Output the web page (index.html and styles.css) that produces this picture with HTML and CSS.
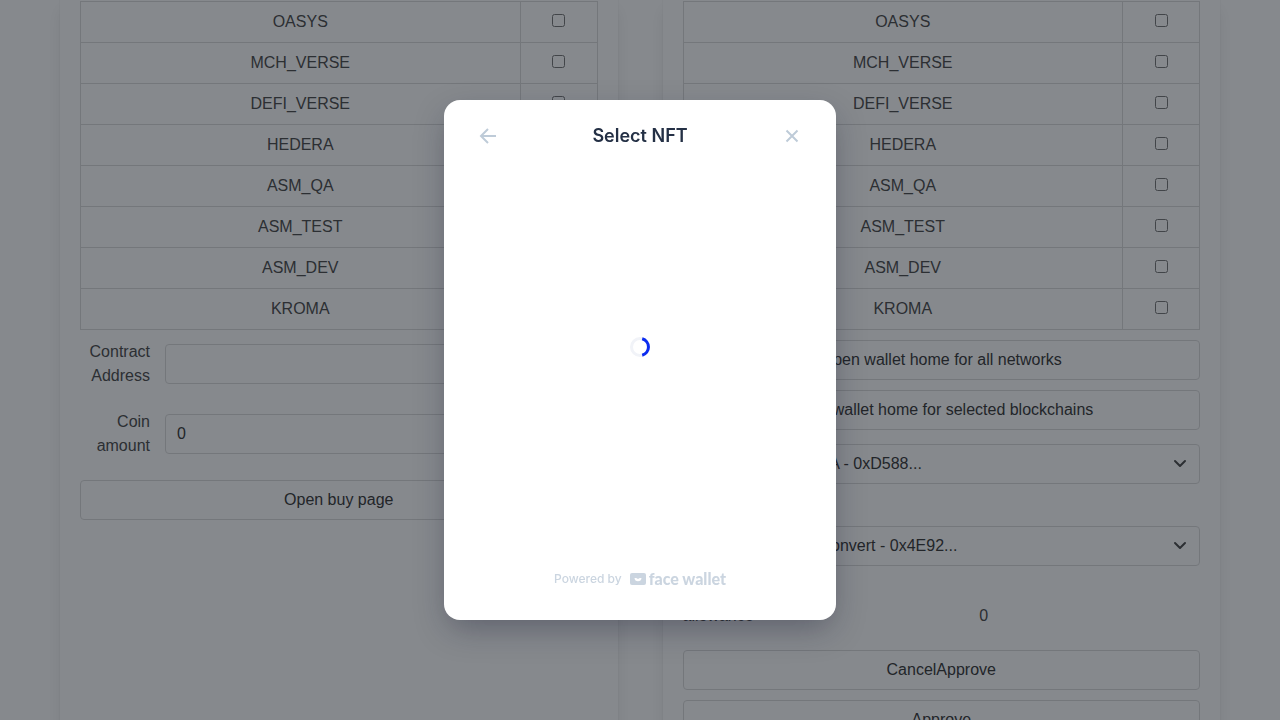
FILE: index.html
```html
<!DOCTYPE html>
<html lang="en">
<head>
<meta charset="utf-8">
<meta name="viewport" content="width=device-width, initial-scale=1">
<title>Select NFT</title>
<link rel="stylesheet" href="styles.css">
</head>
<body>
<main class="columns">
  <section class="box">
    <table class="table">
      <tbody>
        <tr><td><label for="a1">OASYS</label></td><td><input type="checkbox" id="a1"></td></tr>
        <tr><td><label for="a2">MCH_VERSE</label></td><td><input type="checkbox" id="a2"></td></tr>
        <tr><td><label for="a3">DEFI_VERSE</label></td><td><input type="checkbox" id="a3"></td></tr>
        <tr><td><label for="a4">HEDERA</label></td><td><input type="checkbox" id="a4"></td></tr>
        <tr><td><label for="a5">ASM_QA</label></td><td><input type="checkbox" id="a5"></td></tr>
        <tr><td><label for="a6">ASM_TEST</label></td><td><input type="checkbox" id="a6"></td></tr>
        <tr><td><label for="a7">ASM_DEV</label></td><td><input type="checkbox" id="a7"></td></tr>
        <tr><td><label for="a8">KROMA</label></td><td><input type="checkbox" id="a8"></td></tr>
      </tbody>
    </table>
    <div class="field">
      <label class="field-label" for="address">Contract Address</label>
      <input class="input" type="text" id="address">
    </div>
    <div class="field">
      <label class="field-label" for="amount">Coin amount</label>
      <input class="input" type="text" id="amount" value="0">
    </div>
    <button class="button" type="button">Open buy page</button>
  </section>

  <section class="box">
    <table class="table">
      <tbody>
        <tr><td><label for="b1">OASYS</label></td><td><input type="checkbox" id="b1"></td></tr>
        <tr><td><label for="b2">MCH_VERSE</label></td><td><input type="checkbox" id="b2"></td></tr>
        <tr><td><label for="b3">DEFI_VERSE</label></td><td><input type="checkbox" id="b3"></td></tr>
        <tr><td><label for="b4">HEDERA</label></td><td><input type="checkbox" id="b4"></td></tr>
        <tr><td><label for="b5">ASM_QA</label></td><td><input type="checkbox" id="b5"></td></tr>
        <tr><td><label for="b6">ASM_TEST</label></td><td><input type="checkbox" id="b6"></td></tr>
        <tr><td><label for="b7">ASM_DEV</label></td><td><input type="checkbox" id="b7"></td></tr>
        <tr><td><label for="b8">KROMA</label></td><td><input type="checkbox" id="b8"></td></tr>
      </tbody>
    </table>
    <button class="button" type="button">Open wallet home for all networks</button>
    <button class="button" type="button">Open wallet home for selected blockchains</button>
    <div class="field">
      <label class="field-label" for="token">Token contract</label>
      <div class="select">
        <select id="token"><option>Badge A - 0xD588...</option></select>
        <svg class="caret" viewBox="0 0 14 9" aria-hidden="true"><path d="M2 2l5 5 5-5"/></svg>
      </div>
    </div>
    <div class="field">
      <label class="field-label" for="spender">Spender contract address</label>
      <div class="select">
        <select id="spender"><option>Face Convert - 0x4E92...</option></select>
        <svg class="caret" viewBox="0 0 14 9" aria-hidden="true"><path d="M2 2l5 5 5-5"/></svg>
      </div>
    </div>
    <div class="field">
      <span class="field-label field-label-start">allowance</span>
      <output class="value">0</output>
    </div>
    <button class="button" type="button">CancelApprove</button>
    <button class="button" type="button">Approve</button>
  </section>
</main>

<div class="overlay">
  <div class="modal" role="dialog" aria-modal="true" aria-labelledby="modal-title">
    <header class="modal-header">
      <button class="icon-button" type="button" aria-label="Back">
        <svg class="icon" viewBox="0 0 24 24"><path d="M20 12H5.500M12 5l-7 7 7 7"/></svg>
      </button>
      <h1 class="modal-title" id="modal-title">Select NFT</h1>
      <button class="icon-button" type="button" aria-label="Close">
        <svg class="icon" viewBox="0 0 24 24"><path d="M6.500 6.500l11 11M17.500 6.500l-11 11"/></svg>
      </button>
    </header>
    <div class="modal-body">
      <svg class="spinner" viewBox="0 0 20 20" role="img" aria-label="Loading">
        <circle class="spinner-track" cx="10" cy="10" r="8.500"/>
        <path class="spinner-arc" d="M12.200 1.800A8.500 8.500 0 0 1 12.200 18.200"/>
      </svg>
    </div>
    <footer class="modal-footer">
      <span class="powered">Powered by</span>
      <span class="brand">
        <svg class="brand-mark" viewBox="0 0 16 12" aria-hidden="true">
          <rect width="16" height="12" rx="2"/>
          <path d="M4.500 5h1.500c.6 0 1 .8 2 .8s1.400-.8 2-.8h1.500c0 2-1.500 3.300-3.500 3.300S4.500 7 4.500 5z"/>
        </svg>
        <span class="brand-name">face wallet</span>
      </span>
    </footer>
  </div>
</div>
</body>
</html>
```
FILE: styles.css
```css
*, *::before, *::after {
  box-sizing: border-box;
}

body {
  margin: 0;
  height: 100vh;
  overflow: hidden;
  background: #fff;
  color: #4a4a4a;
  font-family: "Liberation Sans", Arial, sans-serif;
  font-size: 16px;
  line-height: 24px;
}

button, input, select {
  font: inherit;
}

.columns {
  display: grid;
  grid-template-columns: 1fr 1fr;
  gap: 45px;
  min-height: 100vh;
  padding: 0 60px;
}

.box {
  padding: 1px 20px 20px;
  box-shadow: 0 8px 16px -2px rgba(10, 10, 10, 0.1), 0 0 0 1px rgba(10, 10, 10, 0.02);
}

.table {
  width: 100%;
  margin-bottom: 10px;
  border-collapse: collapse;
  table-layout: fixed;
  text-align: center;
}

.table td {
  padding: 8px 12px;
  border: 1px solid #dbdbdb;
}

.table td:last-child {
  width: 77px;
}

.table input {
  margin: 0;
}

.field {
  display: flex;
  align-items: center;
  gap: 15px;
  margin-bottom: 22px;
}

.field-label {
  flex: none;
  width: 70px;
  text-align: right;
}

.field-label-start {
  text-align: left;
}

.input, .select {
  flex: 1;
  min-width: 0;
}

.input, .select select {
  height: 40px;
  padding: 0 11px;
  border: 1px solid #dbdbdb;
  border-radius: 4px;
  background: #fff;
  color: #363636;
}

.select {
  position: relative;
}

.select select {
  width: 100%;
  appearance: none;
}

.caret {
  position: absolute;
  top: 15px;
  right: 13px;
  width: 14px;
  height: 9px;
  fill: none;
  stroke: #4a4a4a;
  stroke-width: 2;
  stroke-linecap: round;
  stroke-linejoin: round;
  pointer-events: none;
}

.value {
  flex: 1;
  text-align: center;
}

.button {
  display: block;
  width: 100%;
  height: 40px;
  margin-bottom: 10px;
  padding: 0 16px;
  border: 1px solid #dbdbdb;
  border-radius: 4px;
  background: #fff;
  color: #363636;
  text-align: center;
}

.overlay {
  position: fixed;
  inset: 0;
  display: flex;
  align-items: center;
  justify-content: center;
  background: rgba(13, 20, 28, 0.5);
}

.modal {
  display: flex;
  flex-direction: column;
  width: 392px;
  height: 520px;
  border-radius: 16px;
  background: #fff;
  box-shadow: 0 12px 32px -4px rgba(20, 24, 48, 0.35);
  font-family: Inter, sans-serif;
  font-optical-sizing: none;
}

.modal-header {
  display: flex;
  align-items: center;
  justify-content: space-between;
  padding: 24px 32px;
}

.modal-title {
  margin: 0;
  color: #243045;
  font-size: 18px;
  font-weight: 600;
  line-height: 24px;
}

.icon-button {
  display: flex;
  padding: 0;
  border: 0;
  background: none;
}

.icon {
  width: 24px;
  height: 24px;
  fill: none;
  stroke: #becbd8;
  stroke-width: 2;
}

.modal-body {
  display: flex;
  flex: 1;
  align-items: center;
  justify-content: center;
  padding-bottom: 48px;
}

.spinner {
  width: 20px;
  height: 20px;
  fill: none;
  stroke-width: 3;
}

.spinner-track {
  stroke: #f1f3f8;
}

.spinner-arc {
  stroke: #0c2cf0;
}

.modal-footer {
  display: flex;
  align-items: center;
  justify-content: center;
  gap: 8px;
  padding: 0 0 32px;
  color: #cbd5e0;
  line-height: 18px;
}

.powered {
  font-size: 12px;
  font-weight: 500;
}

.brand {
  display: flex;
  align-items: center;
  gap: 3px;
}

.brand-mark {
  width: 16px;
  height: 12px;
  fill: #cbd5e0;
}

.brand-mark path {
  fill: #fff;
}

.brand-name {
  font-family: Lato, sans-serif;
  font-size: 16px;
  font-weight: 900;
}
```
